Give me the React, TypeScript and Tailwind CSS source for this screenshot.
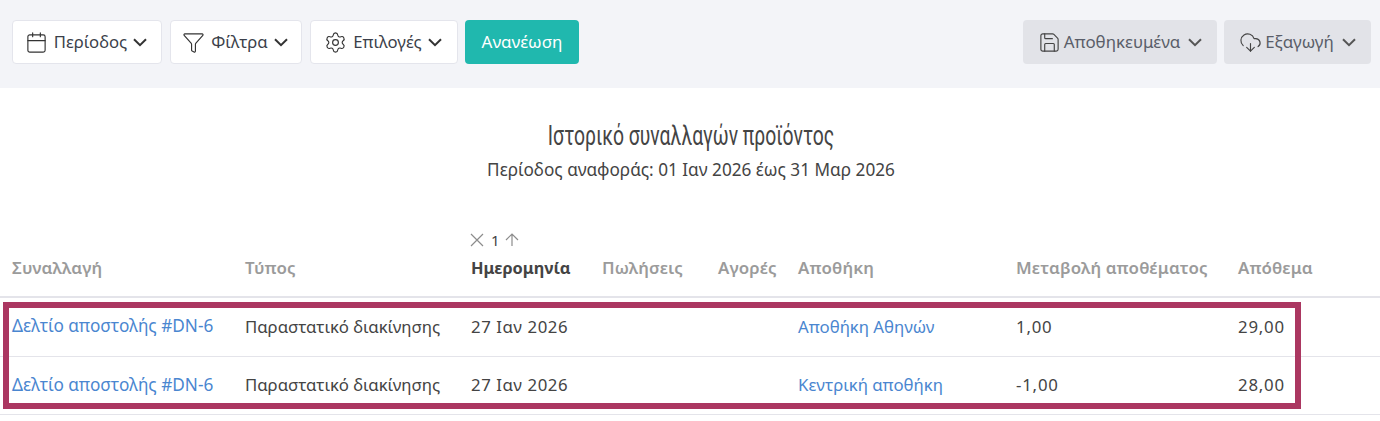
import { Calendar, Filter, Settings, Save, CloudDownload } from 'lucide-react';
import type { ReactNode } from 'react';

const cols = 'grid grid-cols-[233px_226px_131px_116px_80px_218px_222px_1fr] pl-3';

const rows = [
    { warehouse: 'Αποθήκη Αθηνών', change: '1,00', stock: '29,00' },
    { warehouse: 'Κεντρική αποθήκη', change: '-1,00', stock: '28,00' },
];

const Chevron = ({ className }: { className: string }) => (
    <svg width="14" height="9" viewBox="0 0 14 9" fill="none" stroke="currentColor" strokeWidth="2" className={className}>
        <path d="M1 1.2l6 6 6-6" />
    </svg>
);

const ToolButton = ({ icon, label, width }: { icon: ReactNode; label: string; width: string }) => (
    <button className={`${width} h-11 flex items-center justify-center gap-[6px] pr-[2px] bg-white border border-[#e4e5ec] rounded text-[#3b3f4a] text-[16.7px]`}>
        {icon}
        <span>{label}</span>
        <Chevron className="text-[#333]" />
    </button>
);

const GreyButton = ({ icon, label, width }: { icon: ReactNode; label: string; width: string }) => (
    <button className={`${width} h-11 flex items-center justify-center gap-[5px] bg-[#e2e3e8] rounded text-[#5a5e69] text-[16.9px]`}>
        <span className="flex -mr-[2px]">{icon}</span>
        <span>{label}</span>
        <Chevron className="text-[#555] ml-[3px]" />
    </button>
);

export default function App() {
    return (
        <div className="relative w-[1380px] h-[421px] bg-white overflow-hidden font-['Noto_Sans',sans-serif]">
            <div className="h-[88px] bg-[#f3f4f8] flex items-start justify-between pt-5 pl-3 pr-[9px]">
                <div className="flex items-center gap-2">
                    <ToolButton width="w-[150px]" label="Περίοδος" icon={<Calendar size={23} strokeWidth={1.2} className="text-[#333]" />} />
                    <ToolButton width="w-[132px]" label="Φίλτρα" icon={<Filter size={23} strokeWidth={1.2} className="text-[#333]" />} />
                    <ToolButton width="w-[148px]" label="Επιλογές" icon={<Settings size={23} strokeWidth={1.2} className="text-[#333]" />} />
                    <button className="w-[114px] h-11 -ml-px bg-[#20b8ae] rounded text-white text-[17px]">Ανανέωση</button>
                </div>
                <div className="flex items-center gap-[7px]">
                    <GreyButton width="w-[194px]" label="Αποθηκευμένα" icon={<Save size={23} strokeWidth={1.2} className="text-[#444]" />} />
                    <GreyButton width="w-[147px]" label="Εξαγωγή" icon={<CloudDownload size={23} strokeWidth={1.2} className="text-[#444]" />} />
                </div>
            </div>

            <div className="text-center pt-[32px] text-[#444]">
                <h1 className="pl-[3px] font-['Roboto',sans-serif] text-[28px] leading-[32px] scale-x-[0.69]">Ιστορικό συναλλαγών προϊόντος</h1>
                <p className="mt-[2px] pl-[2px] text-[17.2px] leading-[32px] text-[#444]">Περίοδος αναφοράς: 01 Ιαν 2026 έως 31 Μαρ 2026</p>
            </div>

            <div className="mt-[43px]">
                <div className={`${cols} h-[69px] items-end pb-[18px] border-b-2 border-[#e4e4ea] text-[16.9px] leading-5 font-semibold tracking-[0.15px] text-[#9b9b9b]`}>
                    <div>Συναλλαγή</div>
                    <div>Τύπος</div>
                    <div>
                        <div className="flex items-center mb-[8px] font-normal text-[#444] text-[15px]">
                            <svg width="14" height="14" viewBox="0 0 14 14" fill="none" stroke="#8c8c8c" strokeWidth="1.2" className="-ml-px">
                                <path d="M1 1l12 12M13 1L1 13" />
                            </svg>
                            <span className="ml-[7px]">1</span>
                            <svg width="14" height="14" viewBox="0 0 14 14" fill="none" stroke="#8c8c8c" strokeWidth="1.2" className="ml-[5px]">
                                <path d="M7 13V1M1 7l6-6 6 6" />
                            </svg>
                        </div>
                        <div className="text-[#444] font-bold text-[16.4px] tracking-normal">Ημερομηνία</div>
                    </div>
                    <div>Πωλήσεις</div>
                    <div>Αγορές</div>
                    <div>Αποθήκη</div>
                    <div>Μεταβολή αποθέματος</div>
                    <div>Απόθεμα</div>
                </div>
                {rows.map((row) => (
                    <div key={row.warehouse} className={`${cols} h-[58.5px] items-center pb-px border-b border-[#e4e4ea] text-[16.8px] text-[#444]`}>
                        <a className="text-[#4a86d0] text-[17.2px]">Δελτίο αποστολής #DN-6</a>
                        <div className="tracking-[-0.05px]">Παραστατικό διακίνησης</div>
                        <div className="tracking-[0.55px]">27 Ιαν 2026</div>
                        <div />
                        <div />
                        <a className="text-[#4a86d0]">{row.warehouse}</a>
                        <div className="tracking-[0.8px]">{row.change}</div>
                        <div className="tracking-[0.8px]">{row.stock}</div>
                    </div>
                ))}
            </div>

            {/* Highlight frame over the two rows */}
            <div className="absolute left-[3px] top-[302px] w-[1298px] h-[107px] border-[6px] border-[#ab3761]" />
        </div>
    );
}
